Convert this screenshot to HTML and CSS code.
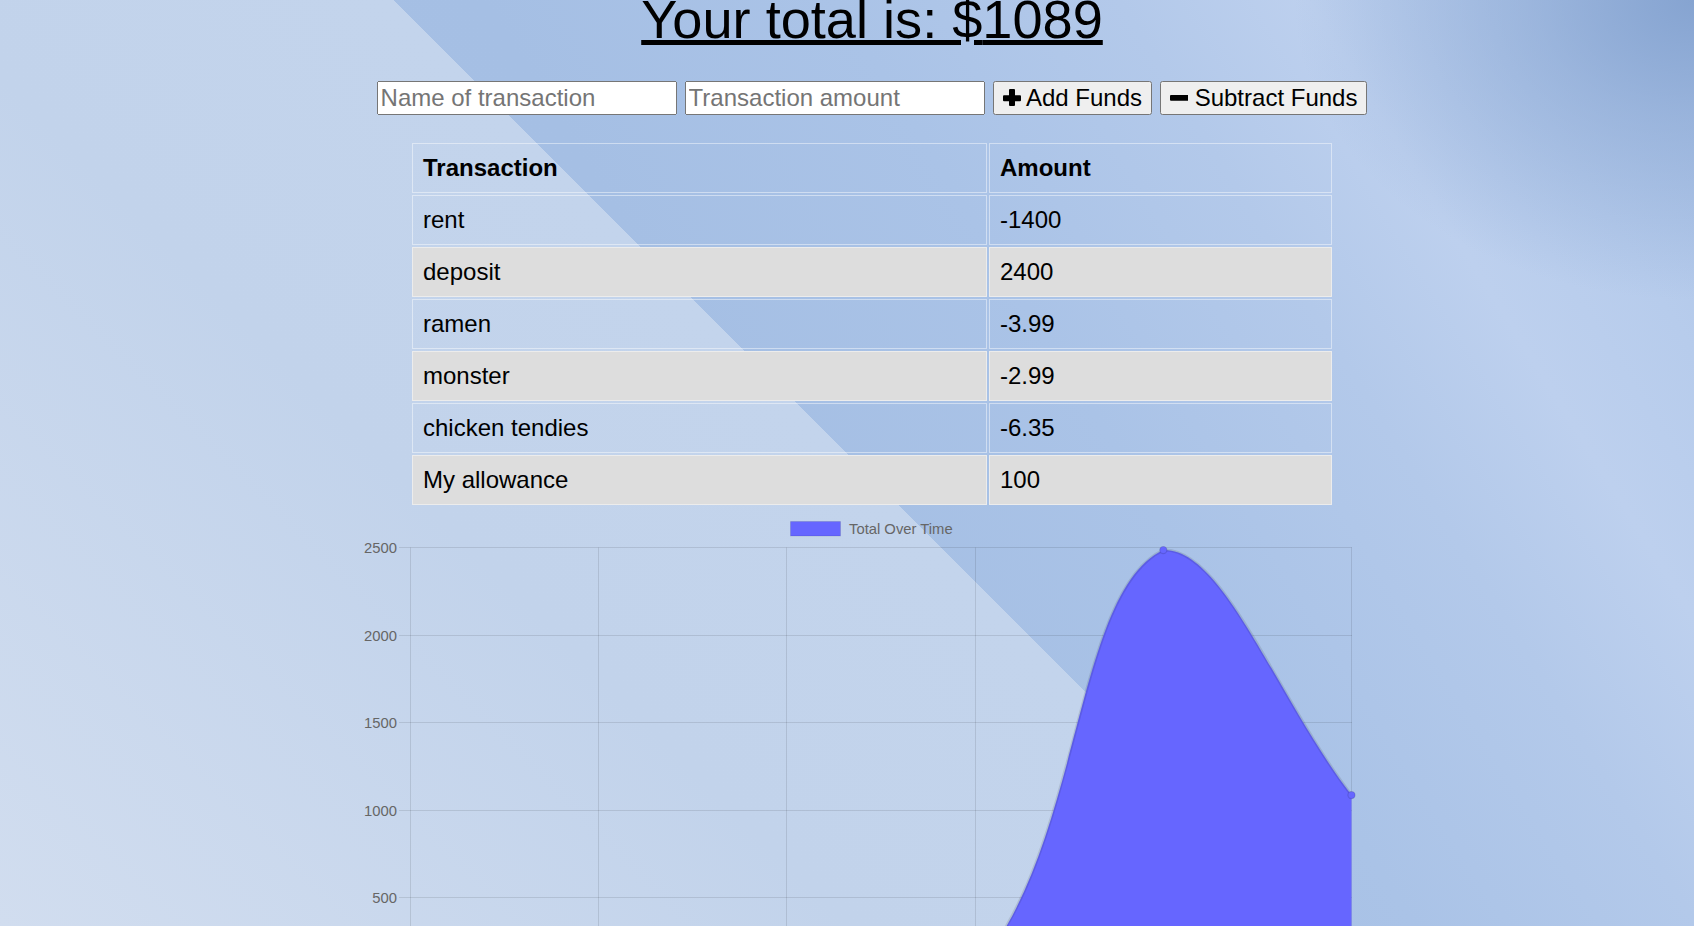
FILE: index.html
```html
<!DOCTYPE html>
<html lang="en">
<head>
  <meta charset="UTF-8">
  <title>Budget Tracker</title>
  <link rel="stylesheet" href="styles.css">
</head>
<body>
  <div class="wrapper">
    <div class="total">Your total is: $<span id="total">1089</span></div>

    <div class="form">
      <input type="text" class="field" placeholder="Name of transaction">
      <input type="text" class="field" placeholder="Transaction amount">
      <button class="btn"><svg class="icon" width="18" height="17" viewBox="0 0 18 17"><rect x="0" y="6.2" width="18" height="6" rx="1"/><rect x="6" y="0" width="6" height="17" rx="1"/></svg> Add Funds</button>
      <button class="btn"><svg class="icon" width="18" height="17" viewBox="0 0 18 17"><rect x="0" y="6" width="18.5" height="5.8" rx="1"/></svg> Subtract Funds</button>
    </div>

    <table class="transactions">
      <thead>
        <tr><th class="col-name">Transaction</th><th>Amount</th></tr>
      </thead>
      <tbody>
        <tr><td>rent</td><td>-1400</td></tr>
        <tr><td>deposit</td><td>2400</td></tr>
        <tr><td>ramen</td><td>-3.99</td></tr>
        <tr><td>monster</td><td>-2.99</td></tr>
        <tr><td>chicken tendies</td><td>-6.35</td></tr>
        <tr><td>My allowance</td><td>100</td></tr>
      </tbody>
    </table>

    <svg class="chart" width="1100" height="419" viewBox="322 507 1100 419">
      <g class="legend">
        <rect x="790.5" y="521.5" width="50" height="14.5" fill="#6666ff" stroke="rgba(0,0,0,0.1)" stroke-width="1"/>
        <text x="849" y="533.8" class="tick">Total Over Time</text>
      </g>
      <g class="grid" stroke="rgba(0,0,0,0.1)" stroke-width="1">
        <line x1="399" y1="547.5" x2="1352" y2="547.5"/>
        <line x1="399" y1="635.5" x2="1352" y2="635.5"/>
        <line x1="399" y1="722.5" x2="1352" y2="722.5"/>
        <line x1="399" y1="810.5" x2="1352" y2="810.5"/>
        <line x1="399" y1="897.5" x2="1352" y2="897.5"/>
        <line x1="410.5" y1="547.5" x2="410.5" y2="1000"/>
        <line x1="598.5" y1="547.5" x2="598.5" y2="1000"/>
        <line x1="786.5" y1="547.5" x2="786.5" y2="1000"/>
        <line x1="975.5" y1="547.5" x2="975.5" y2="1000"/>
        <line x1="1163.5" y1="547.5" x2="1163.5" y2="1000"/>
        <line x1="1351.5" y1="547.5" x2="1351.5" y2="1000"/>
      </g>
      <g class="ticks">
        <text x="397" y="553" class="tick" text-anchor="end">2500</text>
        <text x="397" y="641" class="tick" text-anchor="end">2000</text>
        <text x="397" y="728" class="tick" text-anchor="end">1500</text>
        <text x="397" y="816" class="tick" text-anchor="end">1000</text>
        <text x="397" y="903" class="tick" text-anchor="end">500</text>
      </g>
      <path fill="#6666ff" d="M410.5,985.3 L410.5,967.8 C485.8,968.2 523.4,968.6 598.7,968.9 C674.0,969.2 711.6,969.2 786.9,969.4 C862.2,969.6 931.4,985.3 975.1,970.1 C1082.0,851.1 1073.2,592.0 1163.3,550.1 C1223.8,547.8 1276.2,697.1 1351.5,795.1 L1351.5,985.3 Z"/>
      <path fill="none" stroke="rgba(0,0,0,0.1)" stroke-width="3" d="M410.5,967.8 C485.8,968.2 523.4,968.6 598.7,968.9 C674.0,969.2 711.6,969.2 786.9,969.4 C862.2,969.6 931.4,985.3 975.1,970.1 C1082.0,851.1 1073.2,592.0 1163.3,550.1 C1223.8,547.8 1276.2,697.1 1351.5,795.1"/>
      <g fill="#6666ff" stroke="rgba(0,0,0,0.12)" stroke-width="1.2">
        <circle cx="1163.3" cy="550.1" r="3.6"/>
        <circle cx="1351.5" cy="795.1" r="3.6"/>
      </g>
    </svg>
  </div>
</body>
</html>
```

FILE: styles.css
```css
html {
  height: 100%;
}

body {
  margin: 0;
  min-height: 100%;
  font-family: "Liberation Sans", Arial, Helvetica, sans-serif;
  color: #000;
  background:
    linear-gradient(45deg, #d1ddef 0px, #c2d3eb 600px, #c3d4ec 933px, transparent 933px),
    radial-gradient(ellipse 400px 300px at 100% 0%, rgba(134, 164, 209, 1) 0%, rgba(134, 164, 209, 0.55) 40%, rgba(134, 164, 209, 0) 100%),
    linear-gradient(58deg, #a8c1e6 0px, #a5bfe4 900px, #aac3e7 1200px, #b3c9ea 1440px, #bdd0ee 1600px, #b7ccec 1740px, #aec5e8 1927px);
}

.wrapper {
  width: 1100px;
  margin: 0 auto;
  padding-left: 50px;
}

.total {
  font-size: 54.15px;
  line-height: 38px;
  text-align: center;
  text-decoration: underline;
  text-decoration-thickness: 5px;
  text-underline-offset: 2px;
}

.form {
  display: flex;
  justify-content: center;
  align-items: center;
  gap: 8px;
  margin-top: 43px;
  height: 34px;
}

.field {
  box-sizing: border-box;
  width: 300px;
  height: 34px;
  font-family: "Liberation Sans", Arial, Helvetica, sans-serif;
  font-size: 24px;
  padding: 1px 2px;
}

.btn {
  box-sizing: border-box;
  height: 34px;
  font-family: "Liberation Sans", Arial, Helvetica, sans-serif;
  font-size: 24px;
  padding: 1px 8px;
  color: #000;
  white-space: nowrap;
}

.icon {
  display: inline-block;
  vertical-align: 0;
  fill: #000;
}

.transactions {
  width: 924px;
  margin: 26px auto 0;
  border-spacing: 2px;
  table-layout: fixed;
  text-align: left;
  font-size: 24px;
}

.transactions th,
.transactions td {
  padding: 10px;
  line-height: 28px;
  border: 1px solid rgba(255, 255, 255, 0.45);
}

.transactions .col-name {
  width: 553px;
}

.transactions tbody tr:nth-child(even) td {
  background: #dddddd;
}

.chart {
  display: block;
}

.tick {
  font-family: "Liberation Sans", Arial, Helvetica, sans-serif;
  font-size: 14.8px;
  fill: #666666;
}
```
